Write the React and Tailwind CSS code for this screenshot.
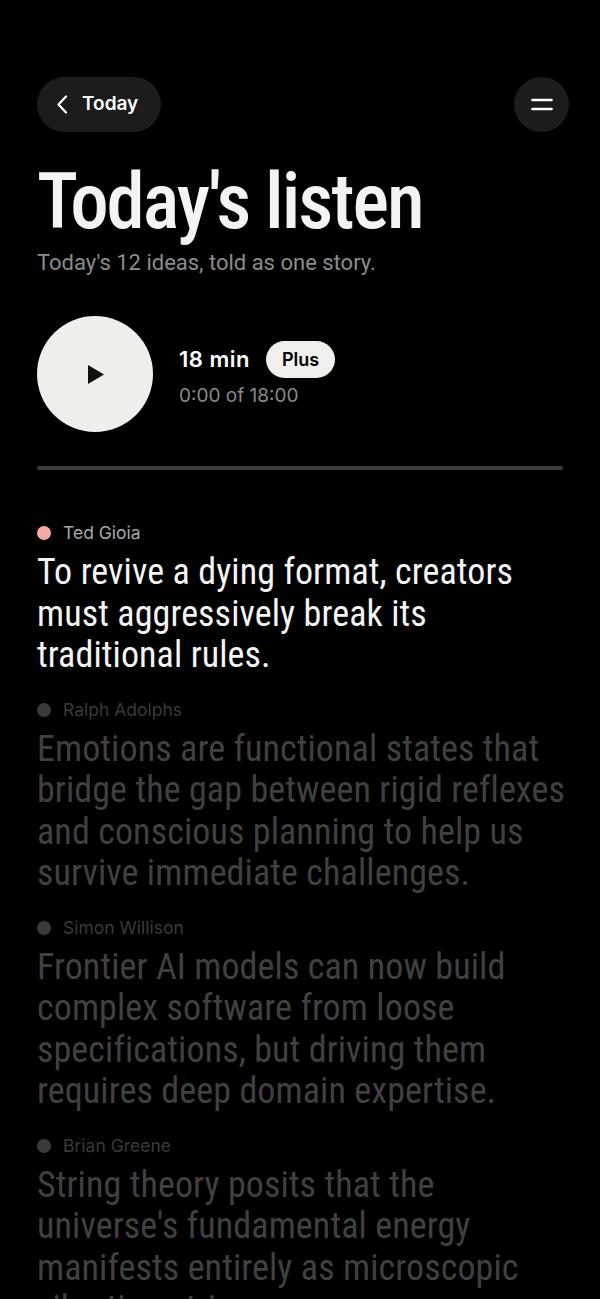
const display = { fontFamily: "'Roboto Condensed', 'Liberation Sans', sans-serif" };
const ui = { fontFamily: "Inter, 'Liberation Sans', sans-serif" };

const ideas = [
  {
    author: 'Ted Gioia',
    lines: ['To revive a dying format, creators', 'must aggressively break its', 'traditional rules.'],
    active: true,
  },
  {
    author: 'Ralph Adolphs',
    lines: [
      'Emotions are functional states that',
      'bridge the gap between rigid reflexes',
      'and conscious planning to help us',
      'survive immediate challenges.',
    ],
  },
  {
    author: 'Simon Willison',
    lines: [
      'Frontier AI models can now build',
      'complex software from loose',
      'specifications, but driving them',
      'requires deep domain expertise.',
    ],
  },
  {
    author: 'Brian Greene',
    lines: [
      'String theory posits that the',
      "universe's fundamental energy",
      'manifests entirely as microscopic',
      'vibrating strings.',
    ],
  },
];

function IdeaItem({ idea }) {
  return (
    <div className="mb-[21px]">
      <div className="flex items-center gap-[12px] h-[24px]">
        <span className={`w-[14px] h-[14px] rounded-full ${idea.active ? 'bg-[#f2aaa3]' : 'bg-[#3a3a3a]'}`} />
        <span
          className={`text-[17.5px] leading-[24px] ${idea.active ? 'text-[#a8a8a8]' : 'text-[#3a3a3a]'}`}
          style={ui}
        >
          {idea.author}
        </span>
      </div>
      <p
        className={`mt-[7px] text-[36px] leading-[41.5px] font-[440] tracking-[0.1px] ${idea.active ? 'text-[#f4f4f4]' : 'text-[#404040]'}`}
        style={display}
      >
        {idea.lines.map((line) => (
          <span key={line} className="block whitespace-nowrap">
            {line}
          </span>
        ))}
      </p>
    </div>
  );
}

export default function App() {
  return (
    <div className="w-[600px] h-[1299px] overflow-hidden bg-black text-white px-[37px] pt-[77px]" style={ui}>
      {/* Top bar */}
      <header className="flex items-center justify-between -mr-[6px]">
        <button className="flex items-center gap-[14px] h-[55px] w-[124px] pl-[19px] rounded-full bg-[#1c1c1c] text-white">
          <svg width="12" height="19" viewBox="0 0 12 19" fill="none">
            <path d="M10 1.5L2.5 9.5L10 17.5" stroke="white" strokeWidth="2.2" strokeLinecap="round" strokeLinejoin="round" />
          </svg>
          <span className="text-[19px] font-semibold">Today</span>
        </button>
        <button className="w-[55px] h-[55px] rounded-full bg-[#1c1c1c] flex items-center justify-center">
          <svg width="22" height="13" viewBox="0 0 22 13" fill="none">
            <path d="M1.5 2H20.5M1.5 11H20.5" stroke="white" strokeWidth="2.6" strokeLinecap="round" />
          </svg>
        </button>
      </header>

      {/* Title */}
      <h1 className="mt-[32px] text-[77px] leading-[77px] font-medium tracking-[-2px] text-[#f3f3f3]" style={display}>
        Today's listen
      </h1>
      <p className="mt-[8px] text-[22px] leading-[28px] text-[#8c8c8c]" style={{ fontFamily: "Roboto, 'Liberation Sans', sans-serif" }}>
        Today's 12 ideas, told as one story.
      </p>

      {/* Player */}
      <div className="mt-[39px] flex items-start gap-[26px]">
        <button className="w-[116px] h-[116px] shrink-0 rounded-full bg-[#efeeea] flex items-center justify-center">
          <svg width="18" height="21" viewBox="0 0 18 21" className="ml-[2px]">
            <path d="M1 1L17 10.5L1 20Z" fill="#111" />
          </svg>
        </button>
        <div className="mt-[25px] flex flex-col">
          <div className="flex items-center gap-[16px] h-[37px]">
            <span className="text-[22px] leading-[37px] font-semibold tracking-[0.5px] text-white">18 min</span>
            <span className="h-[37px] px-[16px] rounded-full bg-[#f0efeb] text-black text-[18px] leading-[37px] font-semibold">
              Plus
            </span>
          </div>
          <span className="mt-[6px] text-[19px] leading-[24px] text-[#8a8a8a]">0:00 of 18:00</span>
        </div>
      </div>

      {/* Progress */}
      <div className="mt-[34px] h-[4px] w-full rounded-full bg-[#3b3b3b]" />

      {/* Ideas */}
      <div className="mt-[51px]">
        {ideas.map((idea) => (
          <IdeaItem key={idea.author} idea={idea} />
        ))}
      </div>
    </div>
  );
}
